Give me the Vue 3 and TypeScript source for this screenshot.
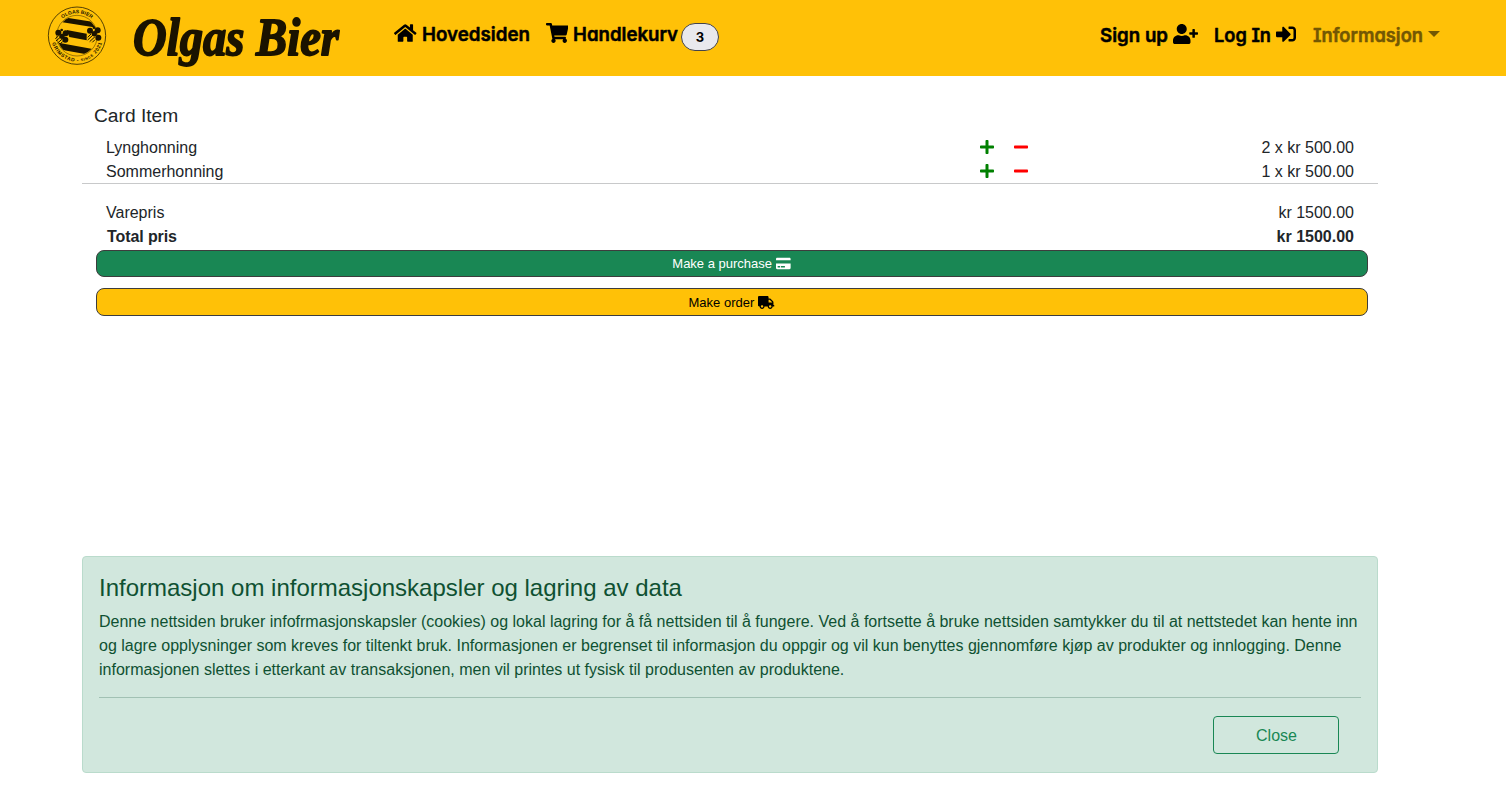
<script setup lang="ts">
interface Glyph {
  w: number
  d: string
}

const icons: Record<string, Glyph> = {
  home: { w: 576, d: 'M280.37 148.26L96 300.11V464a16 16 0 0 0 16 16l112.06-.29a16 16 0 0 0 15.92-16V368a16 16 0 0 1 16-16h64a16 16 0 0 1 16 16v95.64a16 16 0 0 0 16 16.05L464 480a16 16 0 0 0 16-16V300L295.67 148.26a12.19 12.19 0 0 0-15.3 0zM571.6 251.47L488 182.56V44.05a12 12 0 0 0-12-12h-56a12 12 0 0 0-12 12v72.61L318.47 43a48 48 0 0 0-61 0L4.34 251.47a12 12 0 0 0-1.6 16.9l25.5 31A12 12 0 0 0 45.15 301l235.22-193.74a12.19 12.19 0 0 1 15.3 0L530.9 301a12 12 0 0 0 16.9-1.6l25.5-31a12 12 0 0 0-1.7-16.93z' },
  cart: { w: 576, d: 'M528.12 301.319l47.273-208C578.806 78.301 567.391 64 551.99 64H159.208l-9.166-44.81C147.758 8.021 137.93 0 126.529 0H24C10.745 0 0 10.745 0 24v16c0 13.255 10.745 24 24 24h69.883l70.248 343.435C147.325 417.1 136 435.222 136 456c0 30.928 25.072 56 56 56s56-25.072 56-56c0-15.674-6.447-29.835-16.824-40h209.647C430.447 426.165 424 440.326 424 456c0 30.928 25.072 56 56 56s56-25.072 56-56c0-22.172-12.888-41.332-31.579-50.405l5.517-24.276c3.413-15.018-8.002-29.319-23.403-29.319H218.117l-6.545-32h293.145c11.206 0 20.92-7.754 23.403-18.681z' },
  userPlus: { w: 640, d: 'M624 208h-64v-64c0-8.8-7.2-16-16-16h-32c-8.8 0-16 7.2-16 16v64h-64c-8.8 0-16 7.2-16 16v32c0 8.8 7.2 16 16 16h64v64c0 8.8 7.2 16 16 16h32c8.8 0 16-7.2 16-16v-64h64c8.8 0 16-7.2 16-16v-32c0-8.8-7.2-16-16-16zm-400 48c70.7 0 128-57.3 128-128S294.7 0 224 0 96 57.3 96 128s57.3 128 128 128zm89.6 32h-16.7c-22.2 10.2-46.9 16-72.9 16s-50.6-5.8-72.9-16h-16.7C60.2 288 0 348.2 0 422.4V464c0 26.5 21.5 48 48 48h352c26.5 0 48-21.5 48-48v-41.6c0-74.2-60.2-134.4-134.4-134.4z' },
  signIn: { w: 512, d: 'M416 448h-84c-6.6 0-12-5.4-12-12v-40c0-6.6 5.4-12 12-12h84c17.7 0 32-14.3 32-32V160c0-17.7-14.3-32-32-32h-84c-6.6 0-12-5.4-12-12V76c0-6.6 5.4-12 12-12h84c53 0 96 43 96 96v192c0 53-43 96-96 96zm-47-201L201 79c-15-15-41-4.5-41 17v96H24c-13.3 0-24 10.7-24 24v96c0 13.3 10.7 24 24 24h136v96c0 21.5 26 32 41 17l168-168c9.3-9.4 9.3-24.6 0-34z' },
  plus: { w: 448, d: 'M416 208H272V64c0-17.67-14.33-32-32-32h-32c-17.67 0-32 14.33-32 32v144H32c-17.67 0-32 14.33-32 32v32c0 17.67 14.33 32 32 32h144v144c0 17.67 14.33 32 32 32h32c17.67 0 32-14.33 32-32V304h144c17.67 0 32-14.33 32-32v-32c0-17.67-14.33-32-32-32z' },
  minus: { w: 448, d: 'M416 208H32c-17.67 0-32 14.33-32 32v32c0 17.67 14.33 32 32 32h384c17.67 0 32-14.33 32-32v-32c0-17.67-14.33-32-32-32z' },
  card: { w: 576, d: 'M0 432c0 26.5 21.5 48 48 48h480c26.5 0 48-21.5 48-48V256H0v176zm192-68c0-6.6 5.4-12 12-12h136c6.6 0 12 5.4 12 12v40c0 6.6-5.4 12-12 12H204c-6.6 0-12-5.4-12-12v-40zm-128 0c0-6.6 5.4-12 12-12h72c6.6 0 12 5.4 12 12v40c0 6.6-5.4 12-12 12H76c-6.6 0-12-5.4-12-12v-40zM576 80v48H0V80c0-26.5 21.5-48 48-48h480c26.5 0 48 21.5 48 48z' },
  truck: { w: 640, d: 'M624 352h-16V243.9c0-12.7-5.1-24.9-14.1-33.9L494 110.1c-9-9-21.2-14.1-33.9-14.1H416V48c0-26.5-21.5-48-48-48H48C21.5 0 0 21.5 0 48v320c0 26.5 21.5 48 48 48h16c0 53 43 96 96 96s96-43 96-96h128c0 53 43 96 96 96s96-43 96-96h48c8.8 0 16-7.2 16-16v-32c0-8.8-7.2-16-16-16zM160 464c-26.5 0-48-21.5-48-48s21.5-48 48-48 48 21.5 48 48-21.5 48-48 48zm320 0c-26.5 0-48-21.5-48-48s21.5-48 48-48 48 21.5 48 48-21.5 48-48 48zm80-208H416V144h44.1l99.9 99.9V256z' },
}
const box = (name: string) => `0 0 ${icons[name].w} 512`

const items = [
  { name: 'Lynghonning', quantity: 2, price: 500 },
  { name: 'Sommerhonning', quantity: 1, price: 500 },
]
const count = items.reduce((n, i) => n + i.quantity, 0)
const total = items.reduce((n, i) => n + i.quantity * i.price, 0).toFixed(2)
</script>

<template>
  <div class="page">
    <nav class="navbar">
      <svg class="logo" viewBox="0 0 240 228">
        <defs>
          <path id="arc-top" d="M44 107a67 67 0 0 1 134 0" />
          <path id="arc-bottom" d="M33 107a78 78 0 0 0 156 0" />
          <clipPath id="disc"><circle cx="111" cy="107" r="59" /></clipPath>
        </defs>
        <circle class="ring" cx="111" cy="107" r="86" />
        <circle class="ring thin" cx="111" cy="107" r="61" />
        <g clip-path="url(#disc)">
          <path d="M66 51L180 69V85L58 65z" />
          <path d="M80 90L140 101V121L88 111z" />
          <path d="M50 127L162 148L152 165L64 149z" />
        </g>
        <g>
          <circle cx="55" cy="98" r="9" />
          <circle cx="77" cy="100" r="9" />
          <circle cx="66" cy="109" r="8" />
          <circle cx="76" cy="119" r="9" />
          <circle cx="65" cy="90" r="4" />
          <path class="stripes" d="M46 116L56 107M48 123L64 109M53 129L68 116M61 131L68 125" />
          <circle cx="150" cy="92" r="9" />
          <circle cx="173" cy="91" r="9" />
          <circle cx="163" cy="101" r="8" />
          <circle cx="175" cy="113" r="9" />
          <circle cx="162" cy="83" r="4" />
          <path class="stripes" d="M143 112L153 102M143 120L160 104M149 125L165 110M157 127L165 119" />
        </g>
        <text class="seal"><textPath href="#arc-top" startOffset="50%" text-anchor="middle">OLGAS BIER</textPath></text>
        <text class="seal"><textPath href="#arc-bottom" startOffset="50%" text-anchor="middle" textLength="200">GRIMSTAD - <tspan class="since">SINCE</tspan> 2021</textPath></text>
      </svg>

      <svg class="brand" width="220" height="76">
        <text x="5" y="55" textLength="206" lengthAdjust="spacingAndGlyphs">Olgas Bier</text>
      </svg>

      <div class="links">
        <a class="link home">
          <svg class="icon" :viewBox="box('home')"><path :d="icons.home.d" /></svg>
          <svg class="label" width="109" height="30"><text x="0" y="21" textLength="108" lengthAdjust="spacingAndGlyphs">Hovedsiden</text></svg>
        </a>
        <a class="link basket">
          <svg class="icon" :viewBox="box('cart')"><path :d="icons.cart.d" /></svg>
          <svg class="label" width="106" height="30"><text x="0" y="21" textLength="105" lengthAdjust="spacingAndGlyphs">Handlekurv</text></svg>
          <span class="badge">{{ count }}</span>
        </a>
      </div>

      <div class="links right">
        <a class="link">
          <svg class="label" width="69" height="30"><text x="0" y="21" textLength="68" lengthAdjust="spacingAndGlyphs">Sign up</text></svg>
          <svg class="icon" :viewBox="box('userPlus')"><path :d="icons.userPlus.d" /></svg>
        </a>
        <a class="link">
          <svg class="label" width="58" height="30"><text x="0" y="21" textLength="57" lengthAdjust="spacingAndGlyphs">Log In</text></svg>
          <svg class="icon" :viewBox="box('signIn')"><path :d="icons.signIn.d" /></svg>
        </a>
        <a class="link muted">
          <svg class="label" width="111" height="30"><text x="1" y="21" textLength="110" lengthAdjust="spacingAndGlyphs">Informasjon</text></svg>
          <span class="caret"></span>
        </a>
      </div>
    </nav>

    <main class="container">
      <section class="cart">
        <h5>Card Item</h5>
        <div v-for="item in items" :key="item.name" class="row">
          <span class="name">{{ item.name }}</span>
          <span class="actions">
            <svg class="plus" :viewBox="box('plus')"><path :d="icons.plus.d" /></svg>
            <svg class="minus" :viewBox="box('minus')"><path :d="icons.minus.d" /></svg>
          </span>
          <span class="price">{{ item.quantity }} x kr {{ item.price.toFixed(2) }}</span>
        </div>
        <hr />
        <div class="row"><span class="name">Varepris</span><span class="price">kr {{ total }}</span></div>
        <div class="row total"><span class="name">Total pris</span><span class="price">kr {{ total }}</span></div>
        <div class="buttons">
          <button class="purchase">Make a purchase <svg :viewBox="box('card')"><path :d="icons.card.d" /></svg></button>
          <button class="order">Make order <svg :viewBox="box('truck')"><path :d="icons.truck.d" /></svg></button>
        </div>
      </section>

      <section class="alert">
        <h4>Informasjon om informasjonskapsler og lagring av data</h4>
        <p>Denne nettsiden bruker infofrmasjonskapsler (cookies) og lokal lagring for å få nettsiden til å fungere. Ved å fortsette å bruke nettsiden samtykker du til at nettstedet kan hente inn og lagre opplysninger som kreves for tiltenkt bruk. Informasjonen er begrenset til informasjon du oppgir og vil kun benyttes gjennomføre kjøp av produkter og innlogging. Denne informasjonen slettes i etterkant av transaksjonen, men vil printes ut fysisk til produsenten av produktene.</p>
        <hr />
        <div class="foot"><button>Close</button></div>
      </section>
    </main>
  </div>
</template>

<style>
body {
  margin: 0;
  background: #fff;
}
</style>

<style scoped>
.page {
  height: 802px;
  overflow: hidden;
  color: #212529;
  font: 16px/24px "Liberation Sans", Arial, sans-serif;
}
.navbar {
  display: flex;
  align-items: flex-start;
  box-sizing: border-box;
  height: 76px;
  padding: 0 66px 0 40px;
  background: #ffc107;
}
svg {
  display: block;
  flex: none;
}
.logo {
  width: 80px;
  height: 76px;
  fill: #1a1300;
}
.ring {
  fill: none;
  stroke: #3a2c02;
  stroke-width: 2.6;
}
.thin {
  stroke-width: 1.5;
}
.stripes {
  stroke: #1a1300;
  stroke-width: 3;
}
.seal {
  font: bold 15px "Liberation Sans", Arial, sans-serif;
}
.since {
  font-size: 11px;
}
.brand {
  margin-left: 8px;
  overflow: visible;
}
.brand text {
  fill: #1a1300;
  stroke: #1a1300;
  stroke-width: 1.8;
  stroke-linejoin: round;
  font: italic bold 53px "Liberation Serif", "Times New Roman", serif;
}
.links {
  display: flex;
  gap: 15px;
  margin: 20px 0 0 46px;
}
.links.right {
  gap: 16px;
  margin: 21px 0 0 auto;
}
.link {
  display: flex;
  align-items: flex-start;
  color: #000;
}
.icon {
  width: auto;
  height: 20px;
  margin-top: 3px;
  fill: #000;
}
.home .label,
.basket .label {
  margin-left: 5px;
}
.label {
  overflow: visible;
}
.label text {
  fill: currentColor;
  stroke: currentColor;
  stroke-width: 0.5;
  stroke-linejoin: round;
  font: 600 19.2px Inter, "Noto Sans", sans-serif;
  font-feature-settings: "cv08", "cv11";
}
.right .icon {
  margin: 3px 0 0 4px;
}
.badge {
  box-sizing: border-box;
  width: 38px;
  height: 28px;
  margin: 3px 0 0 2px;
  border: 1px solid #44444a;
  border-radius: 14px;
  background: #e9e9ed;
  font: 700 13px/26px Inter, sans-serif;
  text-align: center;
}
.muted {
  color: #735703;
}
.caret {
  margin: 10px 0 0 5px;
  border: 6px solid transparent;
  border-top-color: currentColor;
  border-bottom: 0;
}
.container {
  width: 1296px;
  margin-left: 82px;
}
.cart {
  height: 480px;
  padding-top: 28px;
  box-sizing: border-box;
}
h5 {
  margin: 0 12px 8px;
  font-size: 19.2px;
  font-weight: 400;
  line-height: 23px;
}
.row {
  display: flex;
  height: 24px;
  padding: 0 24px;
}
.name,
.price {
  line-height: 26px;
}
.name {
  flex: 1;
}
.actions {
  display: flex;
  gap: 20px;
  align-items: center;
}
.actions svg {
  width: 14px;
  height: 16px;
}
.plus {
  fill: green;
}
.minus {
  fill: red;
}
.row:has(.actions) .name {
  flex: none;
  width: 874px;
}
.row:has(.actions) .actions {
  flex: 1;
}
hr {
  height: 1px;
  margin: 0;
  border: 0;
  background: #c8c9ca;
}
.cart hr {
  margin-bottom: 16px;
}
.total {
  padding-left: 25px;
  font-weight: 700;
}
.total .name {
  letter-spacing: -0.1px;
}
.buttons {
  display: grid;
  grid-template-rows: 27px 28px;
  gap: 11px;
  margin: 2px 10px 0 14px;
}
.buttons button {
  display: flex;
  align-items: center;
  justify-content: center;
  gap: 4px;
  padding: 0 1px 0 0;
  border: 1px solid #3d3d3d;
  border-radius: 8px;
  font: 13px "Liberation Sans", Arial, sans-serif;
}
.buttons svg {
  height: 13px;
  fill: currentColor;
}
.purchase {
  background: #198754;
  color: #fff;
}
.order {
  background: #ffc107;
  color: #000;
}
.alert {
  box-sizing: border-box;
  height: 217px;
  padding: 16px;
  border: 1px solid #badbcc;
  border-radius: 4px;
  background: #d1e7dd;
  color: #0f5132;
}
h4 {
  margin: 0 0 8px;
  font-size: 24px;
  font-weight: 400;
  line-height: 29px;
}
p {
  margin: 0;
}
.alert hr {
  margin: 15px 0 18px;
  background: #a1c1b3;
}
.foot {
  display: flex;
  justify-content: flex-end;
  padding-right: 22px;
}
.foot button {
  width: 126px;
  height: 38px;
  padding: 2px 0 0 1px;
  border: 1px solid #198754;
  border-radius: 4px;
  background: transparent;
  color: #198754;
  font: 16px/24px "Liberation Sans", Arial, sans-serif;
}
</style>
